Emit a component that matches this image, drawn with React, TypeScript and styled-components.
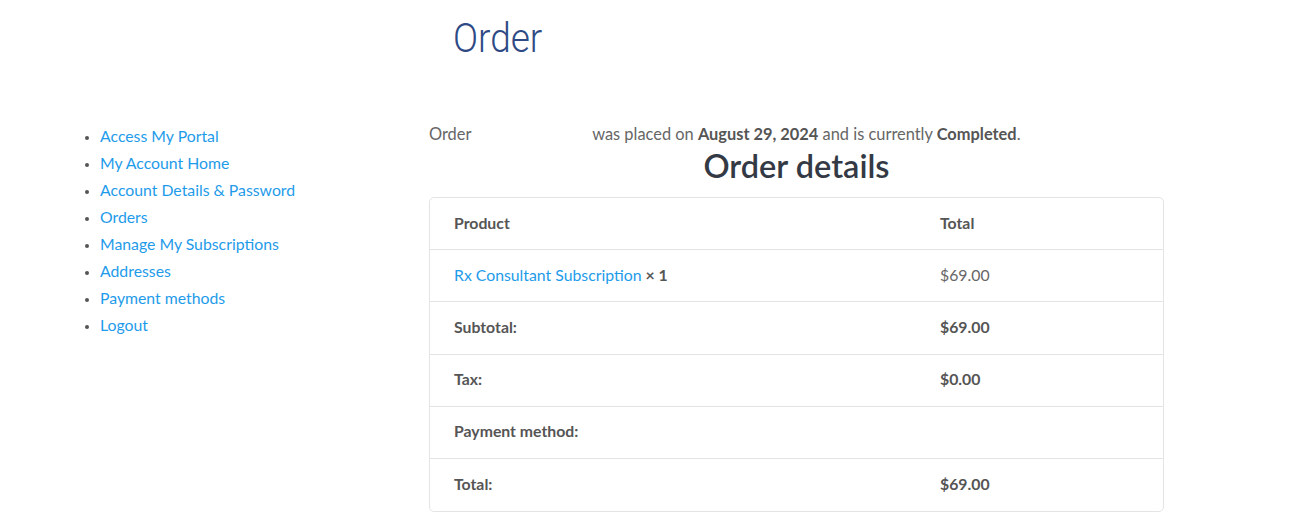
import React from 'react';
import styled, { createGlobalStyle } from 'styled-components';

const GlobalStyle = createGlobalStyle`
  body {
    margin: 0;
    background: #fff;
    font-family: Lato, "Open Sans", sans-serif;
    color: #555;
  }
`;

const Page = styled.div`
  padding: 0 0 0 86px;
`;

const PageTitle = styled.h1`
  margin: 0;
  padding: 15px 0 0 367px;
  height: 71px;
  box-sizing: border-box;
  font-family: Roboto, "Liberation Sans", sans-serif;
  font-weight: 300;
  font-size: 40px;
  line-height: 48px;
  color: #2e4a85;
  span {
    display: inline-block;
    transform: scaleX(0.925);
    transform-origin: left center;
  }
`;

const Columns = styled.div`
  display: flex;
  padding-top: 51px;
`;

const Sidebar = styled.ul`
  width: 343px;
  margin: 0;
  padding: 0 0 0 14px;
  box-sizing: border-box;
  list-style: disc;
  color: #555;
`;

const NavItem = styled.li`
  font-size: 15.8px;
  line-height: 27px;
  &::marker {
    font-size: 13px;
  }
`;

const NavLink = styled.a`
  color: #1e9be9;
  text-decoration: none;
`;

const Main = styled.div`
  width: 735px;
`;

const Notice = styled.p`
  margin: 0;
  font-size: 16.4px;
  line-height: 24px;
  color: #666;
  mark {
    background: none;
    color: #555;
    font-weight: 700;
  }
`;

const Blank = styled.span`
  display: inline-block;
  width: 113px;
`;

const Heading = styled.h2`
  margin: 2px 0 0;
  text-align: center;
  font-size: 32.5px;
  font-weight: 600;
  line-height: 36px;
  color: #343a45;
`;

const Table = styled.div`
  margin-top: 13px;
  border: 1px solid #e4e4e4;
  border-radius: 5px;
`;

const Row = styled.div<{ last?: boolean }>`
  display: grid;
  grid-template-columns: 486px 1fr;
  height: 52.2px;
  box-sizing: border-box;
  align-items: center;
  padding: 0 24px 3px;
  border-bottom: ${({ last }) => (last ? 'none' : '1px solid #e4e4e4')};
  font-size: 15.8px;
  color: #666;
`;

const Label = styled.span`
  font-weight: 700;
  color: #555;
`;

const ProductLink = styled.a`
  color: #1e9be9;
  text-decoration: none;
`;

const Qty = styled.strong`
  color: #555;
`;

const nav = [
  'Access My Portal',
  'My Account Home',
  'Account Details & Password',
  'Orders',
  'Manage My Subscriptions',
  'Addresses',
  'Payment methods',
  'Logout',
];

const totals = [
  { label: 'Subtotal:', value: '$69.00' },
  { label: 'Tax:', value: '$0.00' },
  { label: 'Payment method:', value: '' },
  { label: 'Total:', value: '$69.00' },
];

const App = () => (
  <>
    <GlobalStyle />
    <Page>
      <PageTitle>
        <span>Order</span>
      </PageTitle>
      <Columns>
        <Sidebar>
          {nav.map((item) => (
            <NavItem key={item}>
              <NavLink href="#">{item}</NavLink>
            </NavItem>
          ))}
        </Sidebar>
        <Main>
          <Notice>
            Order <Blank /> was placed on <mark>August 29, 2024</mark> and is
            currently <mark>Completed</mark>.
          </Notice>
          <Heading>Order details</Heading>
          <Table>
            <Row>
              <Label>Product</Label>
              <Label>Total</Label>
            </Row>
            <Row>
              <span>
                <ProductLink href="#">Rx Consultant Subscription</ProductLink>{' '}
                <Qty>× 1</Qty>
              </span>
              <span>$69.00</span>
            </Row>
            {totals.map((t, i) => (
              <Row key={t.label} last={i === totals.length - 1}>
                <Label>{t.label}</Label>
                <Label>{t.value}</Label>
              </Row>
            ))}
          </Table>
        </Main>
      </Columns>
    </Page>
  </>
);

export default App;
